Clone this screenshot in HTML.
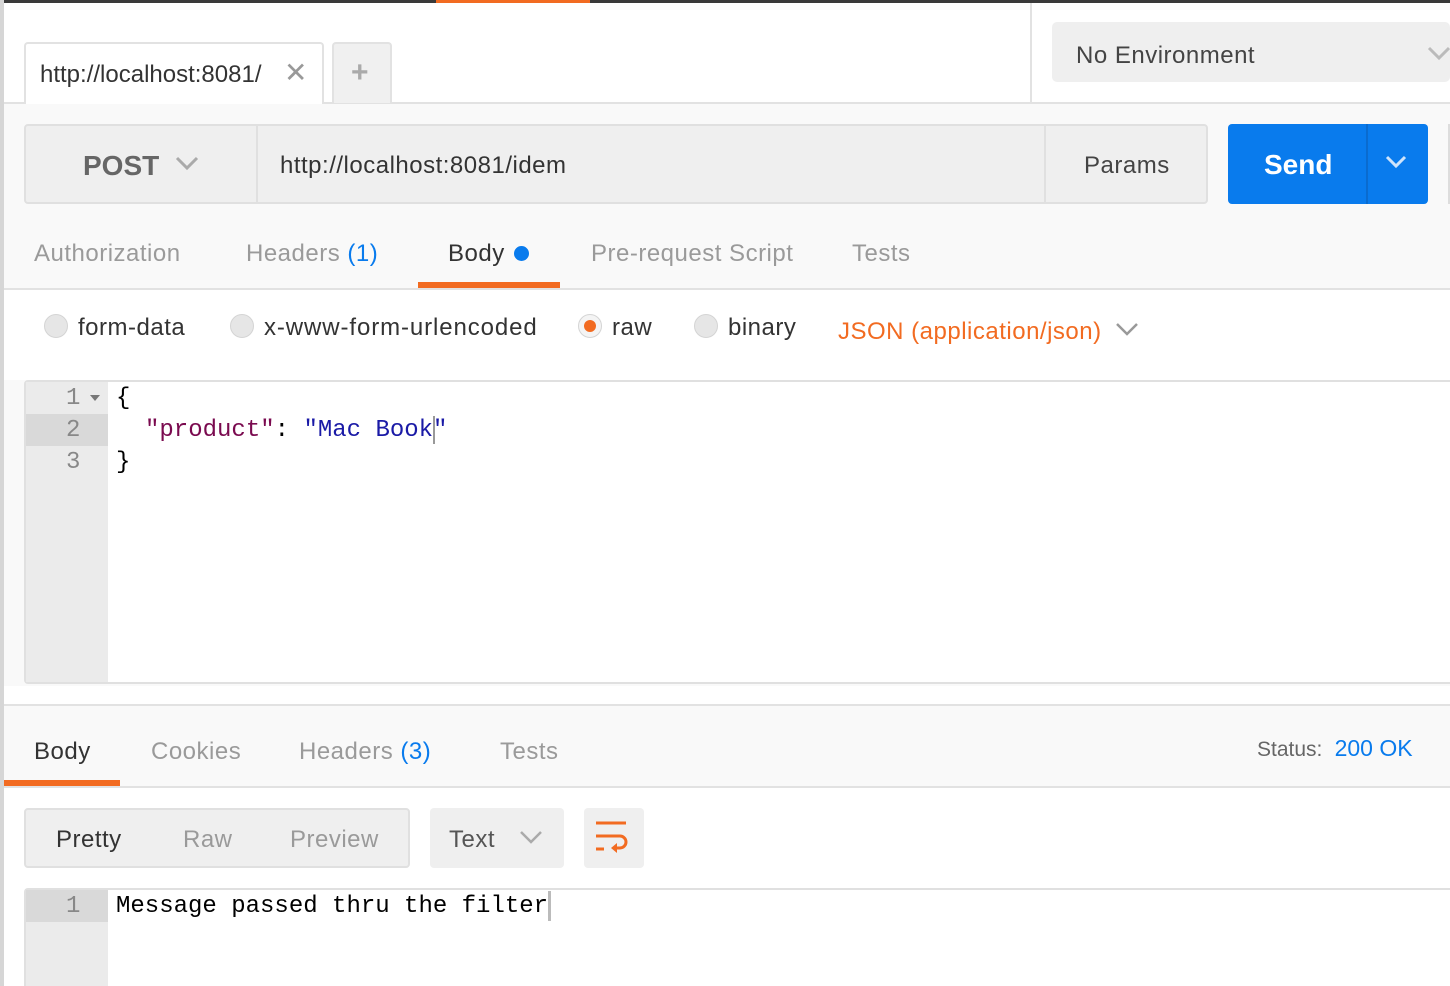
<!DOCTYPE html>
<html><head><meta charset="utf-8"><style>
*{margin:0;padding:0;box-sizing:border-box}
body{width:1450px;height:986px;overflow:hidden;background:#f9f9f9;font-family:"Liberation Sans",sans-serif;position:relative;color:#505050}
.a{position:absolute}
.t{position:absolute;white-space:nowrap;font-size:24px;line-height:28px;letter-spacing:0.5px;margin-top:1px}
.mono{font-family:"Liberation Mono",monospace;font-size:24px;line-height:32px;position:absolute;white-space:nowrap;margin-top:1px}
.radio{position:absolute;width:24px;height:24px;border-radius:50%;background:#e6e6e6;border:1px solid #d4d4d4}
.g{color:#9a9a9a}
.b{color:#097bed}
</style></head><body>
<div class="a" style="left:0;top:0;width:1450px;height:103px;background:#fff"></div>
<div class="a" style="left:0;top:0;width:1450px;height:3px;background:#3a3a3a"></div>
<div class="a" style="top:0;left:436px;width:154px;height:3px;background:#f26b21"></div>
<div class="a" style="left:0;top:0;width:4px;height:986px;background:#d6d6d6"></div>
<div class="a" style="left:4px;top:102px;width:1446px;height:2px;background:#e2e2e2"></div>
<div class="a" style="left:1030px;top:3px;width:2px;height:100px;background:#e2e2e2"></div>
<div class="a" style="left:24px;top:42px;width:300px;height:62px;background:#fff;border:2px solid #e2e2e2;border-bottom:none;border-radius:4px 4px 0 0"></div>
<div class="t" style="left:40px;top:60px;color:#333;letter-spacing:0">http://localhost:8081/</div>
<div class="t" style="left:284px;top:58px;color:#999;font-size:28px">✕</div>
<div class="a" style="left:332px;top:42px;width:60px;height:61px;background:#f0f0f0;border:2px solid #e2e2e2;border-bottom:none;border-radius:4px 4px 0 0"></div>
<div class="t" style="left:351px;top:58px;color:#aaa;font-size:30px;font-weight:bold">+</div>
<div class="a" style="left:1052px;top:22px;width:398px;height:60px;background:#efefef;border-radius:5px"></div>
<div class="t" style="left:1076px;top:41px;color:#444">No Environment</div>
<svg class="a" style="left:1426px;top:44px" width="24" height="20"><path d="M3 4 L13 14 L23 4" stroke="#bbb" stroke-width="3" fill="none"/></svg>
<div class="a" style="left:24px;top:124px;width:1184px;height:80px;background:#efefef;border:2px solid #e0e0e0;border-radius:4px"></div>
<div class="a" style="left:256px;top:126px;width:2px;height:76px;background:#e0e0e0"></div>
<div class="a" style="left:1044px;top:126px;width:2px;height:76px;background:#e0e0e0"></div>
<div class="t" style="left:83px;top:151px;font-weight:bold;font-size:28px;color:#666;letter-spacing:0">POST</div>
<svg class="a" style="left:174px;top:154px" width="28" height="20"><path d="M3 4 L13 14 L23 4" stroke="#aaa" stroke-width="3" fill="none"/></svg>
<div class="t" style="left:280px;top:151px;color:#333">http://localhost:8081/idem</div>
<div class="t" style="left:1084px;top:151px;color:#444">Params</div>
<div class="a" style="left:1228px;top:124px;width:200px;height:80px;background:#097bed;border-radius:4px"></div>
<div class="a" style="left:1366px;top:124px;width:2px;height:80px;background:#0a6bcf"></div>
<div class="t" style="left:1264px;top:150px;color:#fff;font-weight:bold;font-size:28px;letter-spacing:0">Send</div>
<svg class="a" style="left:1384px;top:154px" width="26" height="18"><path d="M3 3 L12 12 L21 3" stroke="#cfe4fb" stroke-width="3" fill="none"/></svg>
<div class="a" style="left:1448px;top:124px;width:2px;height:80px;background:#ddd"></div>
<div class="t g" style="left:34px;top:239px">Authorization</div>
<div class="t g" style="left:246px;top:239px">Headers <span class="b">(1)</span></div>
<div class="t" style="left:448px;top:239px;color:#333">Body</div>
<div class="a" style="left:514px;top:246px;width:15px;height:15px;border-radius:50%;background:#097bed"></div>
<div class="t g" style="left:591px;top:239px">Pre-request Script</div>
<div class="t g" style="left:852px;top:239px">Tests</div>
<div class="a" style="left:4px;top:288px;width:1446px;height:2px;background:#e2e2e2"></div>
<div class="a" style="left:418px;top:282px;width:142px;height:6px;background:#f26b21"></div>
<div class="a" style="left:4px;top:290px;width:1446px;height:90px;background:#fff"></div>
<div class="radio" style="left:44px;top:314px"></div><div class="t" style="left:78px;top:313px;color:#333">form-data</div>
<div class="radio" style="left:230px;top:314px"></div><div class="t" style="left:264px;top:313px;color:#333;letter-spacing:0.9px">x-www-form-urlencoded</div>
<div class="radio" style="left:578px;top:314px;background:#f4f4f4"></div><div class="a" style="left:584px;top:320px;width:12px;height:12px;border-radius:50%;background:#f26b21"></div><div class="t" style="left:612px;top:313px;color:#333">raw</div>
<div class="radio" style="left:694px;top:314px"></div><div class="t" style="left:728px;top:313px;color:#333">binary</div>
<div class="t" style="left:838px;top:317px;color:#f26b21">JSON (application/json)</div>
<svg class="a" style="left:1114px;top:320px" width="28" height="20"><path d="M3 4 L13 14 L23 4" stroke="#999" stroke-width="2.5" fill="none"/></svg>
<div class="a" style="left:24px;top:380px;width:1426px;height:304px;background:#fff;border:2px solid #e0e0e0;border-right:none;border-radius:4px 0 0 4px"></div>
<div class="a" style="left:26px;top:382px;width:82px;height:300px;background:#ebebeb"></div>
<div class="a" style="left:26px;top:414px;width:82px;height:32px;background:#d9d9d9"></div>
<div class="mono" style="left:66px;top:382px;color:#888">1</div>
<svg class="a" style="left:89px;top:394px" width="12" height="8"><path d="M1 1 L11 1 L6 7Z" fill="#777"/></svg>
<div class="mono" style="left:66px;top:414px;color:#888">2</div>
<div class="mono" style="left:66px;top:446px;color:#888">3</div>
<div class="mono" style="left:116px;top:382px;color:#000">{</div>
<div class="mono" style="left:145px;top:414px"><span style="color:#7a0a4f">"product"</span><span style="color:#000">: </span><span style="color:#1a1aa6">"Mac Book"</span></div>
<div class="a" style="left:433px;top:416px;width:2px;height:28px;background:#999"></div>
<div class="mono" style="left:116px;top:446px;color:#000">}</div>
<div class="a" style="left:4px;top:686px;width:1446px;height:18px;background:#fff"></div>
<div class="a" style="left:4px;top:704px;width:1446px;height:2px;background:#e2e2e2"></div>
<div class="t" style="left:34px;top:737px;color:#333">Body</div>
<div class="t g" style="left:151px;top:737px">Cookies</div>
<div class="t g" style="left:299px;top:737px">Headers <span class="b">(3)</span></div>
<div class="t g" style="left:500px;top:737px">Tests</div>
<div class="t" style="left:1257px;top:733px;font-size:21px;color:#666;letter-spacing:0">Status: <span class="b" style="font-size:23px">&nbsp;200 OK</span></div>
<div class="a" style="left:4px;top:786px;width:1446px;height:2px;background:#e2e2e2"></div>
<div class="a" style="left:4px;top:780px;width:116px;height:6px;background:#f26b21"></div>
<div class="a" style="left:4px;top:788px;width:1446px;height:198px;background:#fff"></div>
<div class="a" style="left:24px;top:808px;width:386px;height:60px;background:#efefef;border:2px solid #e0e0e0;border-radius:4px"></div>
<div class="t" style="left:56px;top:825px;color:#333">Pretty</div>
<div class="t g" style="left:183px;top:825px">Raw</div>
<div class="t g" style="left:290px;top:825px">Preview</div>
<div class="a" style="left:430px;top:808px;width:134px;height:60px;background:#efefef;border-radius:4px"></div>
<div class="t" style="left:449px;top:825px;color:#555">Text</div>
<svg class="a" style="left:518px;top:828px" width="28" height="20"><path d="M3 4 L13 14 L23 4" stroke="#aaa" stroke-width="2.5" fill="none"/></svg>
<div class="a" style="left:584px;top:808px;width:60px;height:60px;background:#efefef;border-radius:4px"></div>
<svg class="a" style="left:594px;top:818px" width="40" height="40"><path d="M2 5 H32 M2 18 H26 a6 6 0 0 1 0 12 H20 M2 31 H10" stroke="#f26b21" stroke-width="3" fill="none"/><path d="M17 30 L23 25 L23 35Z" fill="#f26b21"/></svg>
<div class="a" style="left:24px;top:888px;width:1426px;height:98px;border-top:2px solid #e0e0e0;border-left:2px solid #e0e0e0;border-radius:4px 0 0 0"></div>
<div class="a" style="left:26px;top:890px;width:82px;height:96px;background:#ebebeb"></div>
<div class="a" style="left:26px;top:890px;width:82px;height:32px;background:#d9d9d9"></div>
<div class="mono" style="left:66px;top:890px;color:#888">1</div>
<div class="mono" style="left:116px;top:890px;color:#000">Message passed thru the filter</div>
<div class="a" style="left:548px;top:891px;width:3px;height:30px;background:#bbb"></div>
</body></html>
